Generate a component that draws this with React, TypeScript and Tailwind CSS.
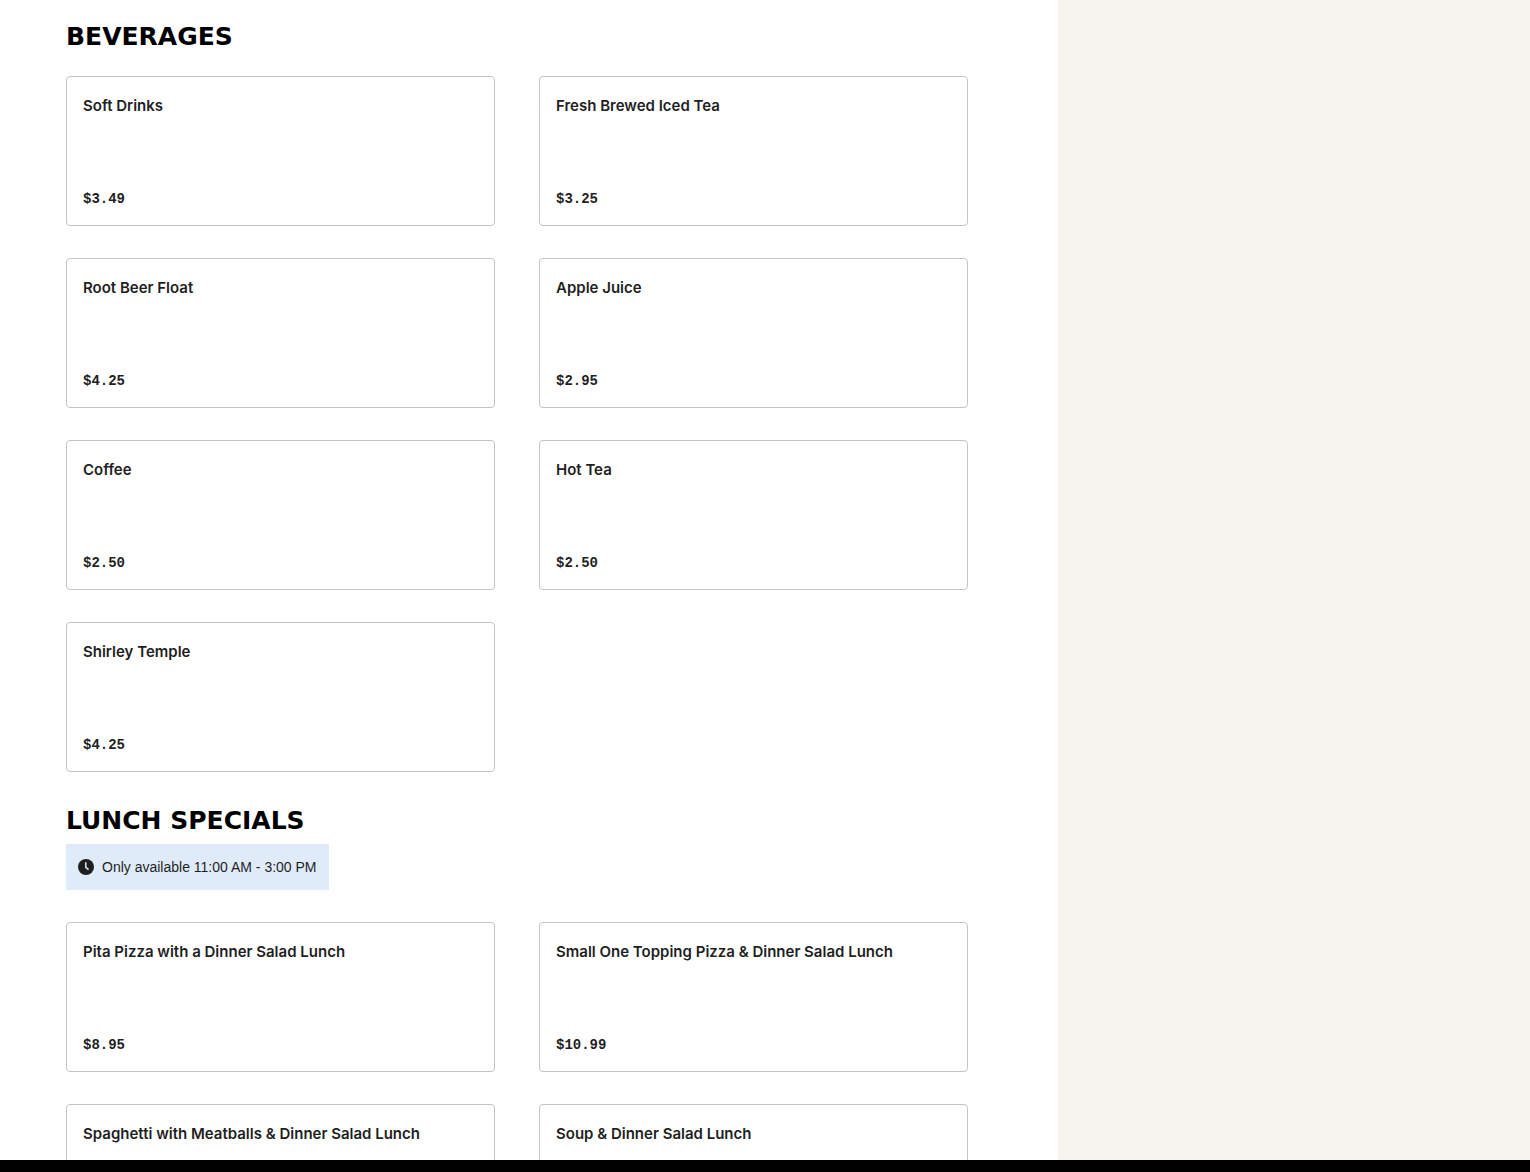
import React, { JSX } from "react";

interface MenuItem {
  name: string;
  price: string;
}

interface MenuSectionProps {
  title: string;
  items: MenuItem[];
  availability?: string;
}

const beverages: MenuItem[] = [
  { name: "Soft Drinks", price: "$3.49" },
  { name: "Fresh Brewed Iced Tea", price: "$3.25" },
  { name: "Root Beer Float", price: "$4.25" },
  { name: "Apple Juice", price: "$2.95" },
  { name: "Coffee", price: "$2.50" },
  { name: "Hot Tea", price: "$2.50" },
  { name: "Shirley Temple", price: "$4.25" },
];

const lunchSpecials: MenuItem[] = [
  { name: "Pita Pizza with a Dinner Salad Lunch", price: "$8.95" },
  { name: "Small One Topping Pizza & Dinner Salad Lunch", price: "$10.99" },
  { name: "Spaghetti with Meatballs & Dinner Salad Lunch", price: "" },
  { name: "Soup & Dinner Salad Lunch", price: "" },
];

const ClockIcon = (): JSX.Element => (
  <svg className="size-4 shrink-0" viewBox="0 0 16 16" fill="none" aria-hidden="true">
    <circle cx="8" cy="8" r="8" fill="#1f1f1f" />
    <path d="M7.8 3.2v5.2l2.8 2.2" stroke="#e0ebfa" strokeWidth="1.5" />
  </svg>
);

const MenuCard = ({ name, price }: MenuItem): JSX.Element => (
  <li>
    <button
      type="button"
      className="flex h-[150px] w-full cursor-pointer flex-col items-start justify-between rounded border border-[#c4c4c4] px-4 pt-[17px] pb-4 text-left text-[#1f1f1f]"
    >
      <span className="text-[15px] leading-6 font-semibold">{name}</span>
      <span className="font-['Liberation_Mono',monospace] text-sm font-bold">{price}</span>
    </button>
  </li>
);

const MenuSection = ({ title, items, availability }: MenuSectionProps): JSX.Element => (
  <section>
    <h2 className="font-['DejaVu_Sans',sans-serif] text-[25px] leading-[34px] font-bold text-black uppercase">
      {title}
    </h2>
    {availability && (
      <p className="mt-1.5 flex w-fit items-center gap-2 bg-[#e0ebfa] px-3 py-[13px] font-['Liberation_Sans',sans-serif] text-sm text-[#1f1f1f]">
        <ClockIcon />
        {availability}
      </p>
    )}
    <ul className={availability ? "mt-8 grid grid-cols-2 gap-x-11 gap-y-8" : "mt-[22px] grid grid-cols-2 gap-x-11 gap-y-8"}>
      {items.map((item) => (
        <MenuCard key={item.name} {...item} />
      ))}
    </ul>
  </section>
);

export default function App(): JSX.Element {
  return (
    <div className="flex h-screen flex-col bg-white font-['Inter',sans-serif]">
      <div className="flex min-h-0 flex-1">
        <main className="flex flex-1 flex-col gap-8 overflow-hidden pt-5 pr-[90px] pl-[66px]">
          <MenuSection title="Beverages" items={beverages} />
          <MenuSection
            title="Lunch Specials"
            items={lunchSpecials}
            availability="Only available 11:00 AM - 3:00 PM"
          />
        </main>
        <aside className="w-[472px] shrink-0 bg-[#f4f3ee]" />
      </div>
      <footer className="h-3 shrink-0 bg-black" />
    </div>
  );
}
